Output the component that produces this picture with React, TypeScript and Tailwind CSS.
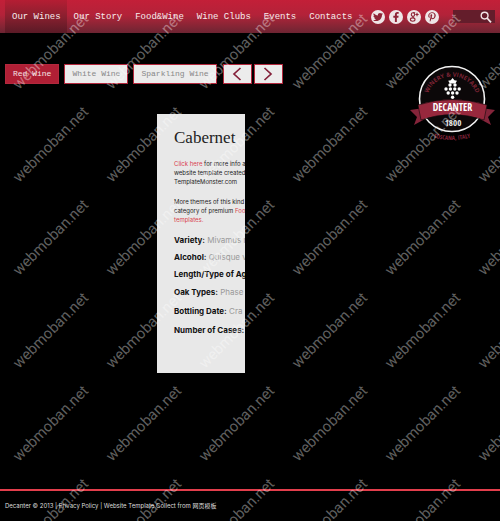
import React from "react";
import { FaTwitter, FaFacebookF, FaPinterestP } from "react-icons/fa";

function GooglePlusMark({ size }: { size: number }) {
  return (
    <svg viewBox="0 0 10 10" width={size} height={size} fill="none" stroke="currentColor" strokeWidth="1.1">
      <ellipse cx="4" cy="2.6" rx="1.7" ry="1.8" />
      <ellipse cx="3.7" cy="7.6" rx="2.3" ry="1.7" />
      <path d="M4 0.8 H6.2 M4.3 4.4 Q3.2 5.2 4.8 6" />
      <path d="M8 0.8 V4.2 M6.4 2.5 H9.6" />
    </svg>
  );
}

const navItems = ["Our Wines", "Our Story", "Food&Wine", "Wine Clubs", "Events", "Contacts"];
const tabs = ["Red Wine", "White Wine", "Sparkling Wine"];
const socials = [
  { label: "Twitter", Icon: FaTwitter },
  { label: "Facebook", Icon: FaFacebookF },
  { label: "Google Plus", Icon: GooglePlusMark },
  { label: "Pinterest", Icon: FaPinterestP },
];
const details = [
  { label: "Variety:", value: "Mivamus n", row: "leading-[17px]" },
  { label: "Alcohol:", value: "Quisque v", row: "leading-[17px]" },
  { label: "Length/Type of Ag", value: "", row: "leading-[17px]" },
  { label: "Oak Types:", value: "Phase", row: "leading-[19px]" },
  { label: "Bottling Date:", value: "Cra", row: "leading-[19px]" },
  { label: "Number of Cases:", value: "", row: "leading-[19px]" },
];

function Header() {
  return (
    <header className="flex h-[33px] items-center bg-linear-to-b from-[#c31f38] via-[#b32239] via-45% to-[#6d2432] px-[5px]">
      <nav className="flex h-full shrink-0">
        {navItems.map((item, i) => (
          <a
            key={item}
            href="#"
            className={`flex h-full items-center whitespace-nowrap pl-[7px] pr-[6px] pt-[2px] font-['Liberation_Mono',monospace] text-[9px] text-[#f7eced] ${
              i === 0 ? "bg-linear-to-b from-[#b51d33] via-[#8a1f2f] to-[#5a1a26]" : ""
            }`}
          >
            {item}
          </a>
        ))}
      </nav>
      <div className="ml-[13px] flex gap-[4px]">
        {socials.map(({ label, Icon }) => (
          <a
            key={label}
            href="#"
            aria-label={label}
            className="flex size-[14px] items-center justify-center rounded-full bg-[#efe6e7] text-[#8f2436]"
          >
            <Icon size={10} />
          </a>
        ))}
      </div>
      <form className="ml-auto flex h-[13px] w-[42px] items-center bg-[#641d2b]">
        <input type="text" aria-label="Search" className="h-full w-[26px] min-w-0 bg-transparent px-px text-[8px] text-white outline-none" />
        <button type="submit" aria-label="Search" className="flex size-[13px] items-center justify-center">
          <svg viewBox="0 0 12 12" className="size-[12px]" fill="none" stroke="#f1e4e6" strokeWidth="1.4">
            <circle cx="4.6" cy="4.6" r="3.4" />
            <path d="M7 7 L11 11.4" strokeWidth="1.8" />
          </svg>
        </button>
      </form>
    </header>
  );
}

function Arrow({ label, path }: { label: string; path: string }) {
  return (
    <button aria-label={label} className="flex h-[20px] w-[29px] items-center justify-center border border-[#b3283d] bg-[#ececec]">
      <svg viewBox="0 0 10 14" className="h-[14px] w-[10px]" fill="none" stroke="#84203a" strokeWidth="1.7">
        <path d={path} />
      </svg>
    </button>
  );
}

function Logo() {
  const grapes = [
    [39, 23], [44, 23], [35, 27], [39.4, 27], [43.8, 27], [48.2, 27], [37.2, 31], [41.6, 31], [46, 31], [41.6, 35.2],
  ];
  return (
    <svg viewBox="0 0 85 80" className="h-[80px] w-[85px] shrink-0" role="img" aria-label="Decanter winery">
      <defs>
        <path id="arcTop" d="M16 42 L17 33 A25.5 25.5 0 0 1 67 33 L68 42" />
        <path id="arcBottom" d="M8 68 Q42 84 76 68" />
      </defs>
      <circle cx="42" cy="35" r="32.5" fill="#0c0809" stroke="#f4f4f4" strokeWidth="1.6" />
      <text fill="#7d2334" fontSize="6" fontWeight="700" fontFamily="Open Sans, sans-serif">
        <textPath href="#arcTop" startOffset="50%" textAnchor="middle">WINERY &amp; VINEYARD</textPath>
      </text>
      <g fill="#fff" transform="translate(1 -2)">
        <path d="M41.6 16 L43.4 18.2 L46 18.8 L44.4 21.4 L38.8 21.4 L37.2 18.8 L39.8 18.2 Z" />
        {grapes.map(([x, y], i) => (
          <circle key={i} cx={x} cy={y} r="1.7" />
        ))}
      </g>
      <path d="M0 46 L14 44 L15 55 L4 61 L7 53 Z M85 46 L71 44 L70 55 L81 61 L78 53 Z" fill="#84243a" />
      <path d="M8 41 Q42 30 77 41 L74 56 Q42 45 11 56 Z" fill="#97283d" stroke="#100a0b" strokeWidth="0.6" />
      <text x="42.5" y="47" textAnchor="middle" fill="#fff" fontSize="10" fontWeight="700" fontFamily="Liberation Sans Narrow, Open Sans Condensed, Roboto Condensed, Liberation Sans, sans-serif">
        DECANTER
      </text>
      <text x="43" y="62" textAnchor="middle" fill="#e8e8e8" fontSize="9" fontWeight="700" fontFamily="Liberation Sans Narrow, Open Sans Condensed, Roboto Condensed, Liberation Sans, sans-serif">
        1800
      </text>
      <text fill="#84243a" fontSize="6" fontWeight="700" fontFamily="Liberation Sans Narrow, Open Sans Condensed, Roboto Condensed, Liberation Sans, sans-serif">
        <textPath href="#arcBottom" startOffset="50%" textAnchor="middle">TOSCANA, ITALY</textPath>
      </text>
    </svg>
  );
}

function WineCard() {
  return (
    <article className="ml-[152px] mt-[30px] h-[259px] w-[88px] overflow-hidden whitespace-nowrap bg-[#e8e8e8] pl-[17px] pt-[14px]">
      <h1 className="font-['Liberation_Serif',serif] text-[17px] leading-[20px] text-[#222]">Cabernet</h1>
      <div className="mt-[11px] text-[6px] leading-[9px] text-[#222]">
        <p>
          <a href="#" className="text-[#d9434f]">Click here</a> for more info a
          <br />
          website template created
          <br />
          TemplateMonster.com
        </p>
        <p className="mt-[11px]">
          More themes of this kind
          <br />
          category of premium <a href="#" className="text-[#d9434f]">Foo
          <br />
          templates.</a>
        </p>
      </div>
      <ul className="mt-[8px] text-[8px] text-[#999]">
        {details.map(({ label, value, row }) => (
          <li key={label} className={row}>
            <strong className="text-[#111]">{label}</strong> {value}
          </li>
        ))}
      </ul>
    </article>
  );
}

function Watermark() {
  const steps = [0, 1, 2, 3, 4, 5];
  return (
    <svg className="pointer-events-none absolute inset-0 size-full" aria-hidden="true">
      <g fill="#fff" fillOpacity="0.38" fontSize="15" fontFamily="Roboto, sans-serif">
        {steps.map((r) =>
          steps.map((c) => (
            <text key={`${r}-${c}`} transform={`translate(${19 + c * 93} ${90 + r * 93}) rotate(-45)`}>
              webmoban.net
            </text>
          ))
        )}
      </g>
    </svg>
  );
}

export default function App() {
  return (
    <div className="relative flex min-h-screen flex-col overflow-hidden bg-black font-['Inter','Noto_Sans_CJK_SC',sans-serif]">
      <Header />
      <main className="flex flex-1 items-start justify-between px-[5px] pt-[31px]">
        <section>
          <div className="flex gap-[5px]">
            {tabs.map((tab, i) => (
              <button
                key={tab}
                className={`h-[20px] whitespace-nowrap border border-[#b3283d] px-[7px] font-['Liberation_Mono',monospace] text-[8px] ${
                  i === 0 ? "bg-[#b01f35] text-[#f5e3e5]" : "bg-[#ececec] text-[#888]"
                }`}
              >
                {tab}
              </button>
            ))}
            <div className="ml-px flex gap-[2px]">
              <Arrow label="Previous" path="M8.5 1 L2 7 L8.5 13" />
              <Arrow label="Next" path="M1.5 1 L8 7 L1.5 13" />
            </div>
          </div>
          <WineCard />
        </section>
        <Logo />
      </main>
      <footer className="h-[32px] border-t-2 border-[#e23e4c] px-[5px] pt-[10px] text-[6px] leading-[10px] text-[#ddd]">
        Decanter © 2013 | <a href="#">Privacy Policy</a> | Website Template Collect from <a href="#">网页模板</a>
      </footer>
      <Watermark />
    </div>
  );
}
